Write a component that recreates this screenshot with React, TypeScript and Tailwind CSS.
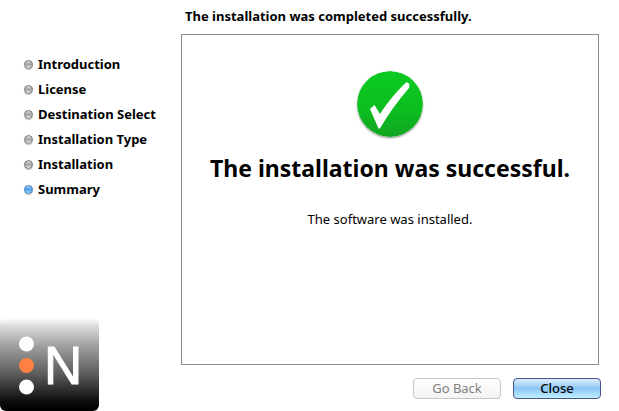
interface Step {
  label: string;
  active?: boolean;
}

const steps: Step[] = [
  { label: 'Introduction' },
  { label: 'License' },
  { label: 'Destination Select' },
  { label: 'Installation Type' },
  { label: 'Installation' },
  { label: 'Summary', active: true },
];

const Bullet = ({ active }: { active?: boolean }) => (
  <span
    className={`h-[9px] w-[9px] shrink-0 rounded-full border shadow-[0_1px_1px_rgba(0,0,0,0.25)] bg-linear-to-b ${
      active
        ? 'border-[#3f78b8] from-[#a9d2fb] via-[#4b9bea] to-[#a5e0ff]'
        : 'border-[#777777] from-[#dddddd] via-[#a2a2a2] to-[#eeeeee]'
    }`}
  />
);

const Logo = () => (
  <svg className="block h-[93px] w-[99px]" viewBox="0 0 99 93" role="img" aria-label="N">
    <defs>
      <linearGradient id="logo-bg" x1="0" y1="0" x2="0" y2="1">
        <stop offset="0" stopColor="#ffffff" />
        <stop offset="0.08" stopColor="#dedede" />
        <stop offset="0.3" stopColor="#a0a0a0" />
        <stop offset="0.6" stopColor="#5c5c5c" />
        <stop offset="0.9" stopColor="#0c0c0c" />
        <stop offset="1" stopColor="#000000" />
      </linearGradient>
    </defs>
    <rect width="99" height="93" rx="6" fill="url(#logo-bg)" />
    <circle cx="26.5" cy="26" r="7.5" fill="#ffffff" />
    <circle cx="26.5" cy="47.5" r="7.5" fill="#ff8040" />
    <circle cx="26.5" cy="69" r="7.5" fill="#ffffff" />
    <text
      x="44"
      y="66"
      fill="#ffffff"
      stroke="#ffffff"
      strokeWidth="1"
      fontSize="53"
      className="font-['Liberation_Sans',sans-serif]"
    >
      N
    </text>
  </svg>
);

const SuccessIcon = () => (
  <svg
    className="h-[66px] w-[66px] rounded-full shadow-[0_1px_2px_rgba(0,0,0,0.45)]"
    viewBox="0 0 66 66"
    aria-hidden="true"
  >
    <defs>
      <linearGradient id="success-bg" x1="0" y1="0" x2="0" y2="1">
        <stop offset="0" stopColor="#0ccb22" />
        <stop offset="0.6" stopColor="#0bbd1f" />
        <stop offset="1" stopColor="#12a422" />
      </linearGradient>
    </defs>
    <circle cx="33" cy="33" r="33" fill="url(#success-bg)" />
    <path
      d="M13 38 L17.5 34 L23 43 C31 31 39 21 49.5 11 L52.5 13 L52 17 C41 30 31 43 23 57.5 L21.5 57.5 Z"
      fill="#ffffff"
    />
  </svg>
);

const Sidebar = () => (
  <aside className="flex w-[181px] shrink-0 flex-col justify-between pt-[52px]">
    <ol className="pl-6">
      {steps.map((step) => (
        <li
          key={step.label}
          aria-current={step.active ? 'step' : undefined}
          className="flex h-[25px] items-center gap-[5px] text-[13px] font-bold whitespace-nowrap"
        >
          <Bullet active={step.active} />
          {step.label}
        </li>
      ))}
    </ol>
    <Logo />
  </aside>
);

export default function App() {
  return (
    <div className="flex min-h-screen bg-white font-['Noto_Sans','Open_Sans',sans-serif] text-black">
      <Sidebar />
      <div className="flex min-w-0 flex-1 flex-col pr-[18px]">
        <h1 className="flex h-[34px] items-center pl-1 text-[13px] font-bold">
          The installation was completed successfully.
        </h1>
        <main className="mr-0.5 flex flex-1 flex-col items-center border border-[#8c8c8c] pt-9 text-center">
          <SuccessIcon />
          <h2 className="mt-[15px] text-[23px] leading-8 font-bold whitespace-nowrap">
            The installation was successful.
          </h2>
          <p className="mt-[25px] text-[13px] leading-5">The software was installed.</p>
        </main>
        <footer className="flex justify-end gap-3 pt-[13px] pb-3">
          <button
            type="button"
            disabled
            className="h-[21px] w-[88px] rounded-[4px] border border-[#c6c6c6] bg-linear-to-b from-white to-[#f3f3f3] text-[13px] leading-none text-[#808080]"
          >
            Go Back
          </button>
          <button
            type="button"
            className="h-[21px] w-[88px] rounded-[4px] border border-[#4a5590] bg-linear-to-b from-[#dcecfb] via-[#8cc6f5] to-[#c0f0ff] text-[13px] leading-none font-medium"
          >
            Close
          </button>
        </footer>
      </div>
    </div>
  );
}
